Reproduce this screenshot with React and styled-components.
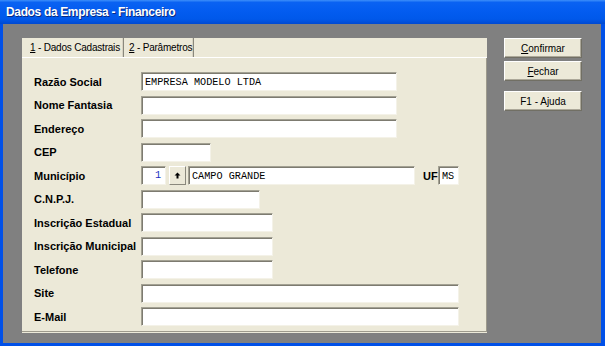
import React from "react";
import styled, { createGlobalStyle } from "styled-components";

const Global = createGlobalStyle`
  html, body { margin: 0; padding: 0; background: #808080; }
  body { font-family: "Liberation Sans", Arial, sans-serif; }
`;

const Window = styled.div`
  width: 605px;
  height: 346px;
  display: flex;
  flex-direction: column;
  background: #0050e8;
  box-sizing: border-box;
  overflow: hidden;
`;

const TitleBar = styled.div`
  height: 24px;
  flex: none;
  display: flex;
  align-items: center;
  padding-left: 6px;
  background: linear-gradient(
    to bottom,
    #3d8ffa 0%,
    #0a62f2 10%,
    #035cf0 45%,
    #0058ea 80%,
    #0049d0 100%
  );
  color: #fff;
  font-family: "Liberation Sans", Arial, sans-serif;
  font-weight: bold;
  font-size: 12px;
  letter-spacing: -0.35px;
  text-shadow: 1px 1px 0 #0a2a80;
`;

const Body = styled.div`
  flex: 1;
  margin: 0 4px 3px 3px;
  background: #808080;
  display: flex;
  align-items: flex-start;
  gap: 17px;
  padding: 14px 0 0 19px;
  box-sizing: border-box;
`;

const TabControl = styled.div`
  width: 465px;
  height: 295px;
  display: flex;
  flex-direction: column;
  background: #ece9d8;
`;

const TabRow = styled.div`
  height: 19px;
  flex: none;
  display: flex;
  align-items: stretch;
  border-bottom: 1px solid #ffffff;
`;

const Tab = styled.div`
  width: ${(p) => p.$w}px;
  box-sizing: border-box;
  display: flex;
  align-items: center;
  padding-left: ${(p) => p.$pl}px;
  font-size: 10px;
  letter-spacing: -0.2px;
  color: #000;
  white-space: nowrap;
  border-right: 1px solid #8a887c;
  box-shadow: inset -1px 0 0 #d8d4c4;
`;

const Panel = styled.div`
  flex: 1;
  display: flex;
  flex-direction: column;
  gap: 4.5px;
  padding: 14px 0 0 12px;
  border-right: 1px solid #9d9a8c;
  border-bottom: 1px solid #9d9a8c;
  margin-bottom: 1px;
`;

const Row = styled.div`
  height: 19px;
  display: flex;
  align-items: center;
`;

const Label = styled.div`
  width: ${(p) => (p.$w ? p.$w : 107)}px;
  flex: none;
  font-size: 11px;
  font-weight: bold;
  color: #000;
  white-space: nowrap;
  margin-left: ${(p) => p.$ml || 0}px;
`;

const Field = styled.div`
  width: ${(p) => p.$w}px;
  height: 19px;
  box-sizing: border-box;
  flex: none;
  background: #ffffff;
  border-top: 1px solid #a3a193;
  border-left: 1px solid #a3a193;
  border-bottom: 1px solid #f4f2e8;
  border-right: 1px solid #f4f2e8;
  box-shadow: inset 1px 1px 0 #7d7b70;
  display: flex;
  align-items: center;
  justify-content: ${(p) => (p.$right ? "flex-end" : "flex-start")};
  padding: ${(p) => (p.$right ? "0 4px 0 0" : "1px 0 0 3px")};
  font-family: "Liberation Mono", "Courier New", monospace;
  font-size: 10.2px;
  color: ${(p) => (p.$blue ? "#1a2fbf" : "#000")};
  white-space: nowrap;
  margin-left: ${(p) => p.$ml || 0}px;
`;

const LookupButton = styled.div`
  width: 17px;
  height: 19px;
  box-sizing: border-box;
  flex: none;
  margin-left: 3px;
  background: #ece9d8;
  border-top: 1px solid #ffffff;
  border-left: 1px solid #ffffff;
  border-right: 1px solid #8a887c;
  border-bottom: 1px solid #8a887c;
  display: flex;
  align-items: center;
  justify-content: center;
`;

const Side = styled.div`
  display: flex;
  flex-direction: column;
  gap: 3px;
`;

const Button = styled.div`
  width: 78px;
  height: 20px;
  box-sizing: border-box;
  background: #ece9d8;
  border-top: 1px solid #ffffff;
  border-left: 1px solid #ffffff;
  border-right: 1px solid #716f64;
  border-bottom: 1px solid #716f64;
  box-shadow: inset -1px -1px 0 #aca899;
  display: flex;
  align-items: center;
  justify-content: center;
  font-size: 10px;
  color: #000;
  margin-top: ${(p) => p.$mt || 0}px;
  u { text-decoration: underline; }
`;

const rows = [
  { label: "Razão Social", w: 256, value: "EMPRESA MODELO LTDA" },
  { label: "Nome Fantasia", w: 256 },
  { label: "Endereço", w: 256 },
  { label: "CEP", w: 70 },
  { label: "Município", municipio: true },
  { label: "C.N.P.J.", w: 119 },
  { label: "Inscrição Estadual", w: 132 },
  { label: "Inscrição Municipal", w: 132 },
  { label: "Telefone", w: 132 },
  { label: "Site", w: 318 },
  { label: "E-Mail", w: 318 },
];

const UpArrow = () => (
  <svg width="7" height="7" viewBox="0 0 7 7">
    <path d="M3.5 0.5 L6.5 3.5 L4.5 3.5 L4.5 6.5 L2.5 6.5 L2.5 3.5 L0.5 3.5 Z" fill="#000" />
  </svg>
);

export default function App() {
  return (
    <>
      <Global />
      <Window>
        <TitleBar>Dados da Empresa - Financeiro</TitleBar>
        <Body>
          <TabControl>
            <TabRow>
              <Tab $w={102} $pl={8}>
                <u>1</u>&nbsp;- Dados Cadastrais
              </Tab>
              <Tab $w={70} $pl={5}>
                <u>2</u>&nbsp;- Parâmetros
              </Tab>
            </TabRow>
            <Panel>
              {rows.map((r) =>
                r.municipio ? (
                  <Row key={r.label}>
                    <Label>{r.label}</Label>
                    <Field $w={25} $right $blue>1</Field>
                    <LookupButton>
                      <UpArrow />
                    </LookupButton>
                    <Field $w={227} $ml={2}>CAMPO GRANDE</Field>
                    <Label $w={15} $ml={8}>UF</Label>
                    <Field $w={21}>MS</Field>
                  </Row>
                ) : (
                  <Row key={r.label}>
                    <Label>{r.label}</Label>
                    <Field $w={r.w}>{r.value || ""}</Field>
                  </Row>
                )
              )}
            </Panel>
          </TabControl>
          <Side>
            <Button>
              <span><u>C</u>onfirmar</span>
            </Button>
            <Button>
              <span><u>F</u>echar</span>
            </Button>
            <Button $mt={7}>F1 - Ajuda</Button>
          </Side>
        </Body>
      </Window>
    </>
  );
}
